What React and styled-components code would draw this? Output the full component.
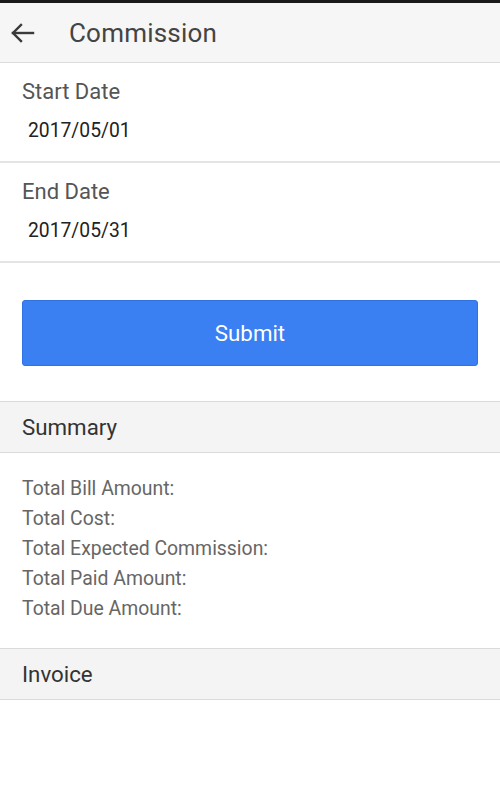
import React from "react";
import styled, { createGlobalStyle } from "styled-components";

const Global = createGlobalStyle`
  body {
    margin: 0;
    background: #fff;
    font-family: Roboto, "Liberation Sans", sans-serif;
  }
`;

const Page = styled.div`
  width: 500px;
  min-height: 806px;
  background: #fff;
  border-top: 3px solid #1a1a1a;
  box-sizing: border-box;
`;

const TopBar = styled.header`
  height: 59px;
  display: flex;
  align-items: center;
  background: #f6f6f6;
  border-bottom: 1px solid #dcdcdc;
  padding-left: 10px;
`;

const Title = styled.h1`
  margin: 0 0 0 33px;
  font-size: 26px;
  font-weight: 400;
  color: #444;
  letter-spacing: 0.2px;
`;

const Field = styled.div`
  height: 100px;
  padding: 17px 22px 0;
  box-sizing: border-box;
  border-bottom: 2px solid #e4e4e4;
`;

const Label = styled.div`
  font-size: 22px;
  color: #555;
  line-height: 24px;
`;

const Value = styled.div`
  margin: 15px 0 0 6px;
  font-size: 19.3px;
  color: #222;
  line-height: 24px;
`;

const ButtonWrap = styled.div`
  padding: 37px 22px 35px;
`;

const Button = styled.button`
  width: 100%;
  height: 66px;
  border: 1px solid #2f72e0;
  border-radius: 3px;
  background: #3a80f2;
  color: #fff;
  font-family: inherit;
  font-size: 22.3px;
  cursor: pointer;
`;

const SectionHead = styled.div`
  height: 50px;
  display: flex;
  align-items: center;
  padding-left: 22px;
  background: #f4f4f4;
  border-top: 1px solid #dadada;
  border-bottom: 1px solid #dadada;
  font-size: 22.3px;
  color: #333;
`;

const SummaryList = styled.ul`
  list-style: none;
  margin: 0;
  padding: 21px 22px 24px;
`;

const SummaryItem = styled.li`
  font-size: 19.4px;
  line-height: 30px;
  color: #666;
`;

const summary = [
  "Total Bill Amount:",
  "Total Cost:",
  "Total Expected Commission:",
  "Total Paid Amount:",
  "Total Due Amount:",
];

export default function App() {
  return (
    <Page>
      <Global />
      <TopBar>
        <svg width="26" height="22" viewBox="0 0 26 22" fill="none" stroke="#3a3a3a" strokeWidth="2.4" strokeLinecap="square">
          <path d="M3 11h20" />
          <path d="M11 3l-8 8 8 8" />
        </svg>
        <Title>Commission</Title>
      </TopBar>
      <Field>
        <Label>Start Date</Label>
        <Value>2017/05/01</Value>
      </Field>
      <Field>
        <Label>End Date</Label>
        <Value>2017/05/31</Value>
      </Field>
      <ButtonWrap>
        <Button>Submit</Button>
      </ButtonWrap>
      <SectionHead>Summary</SectionHead>
      <SummaryList>
        {summary.map((s) => (
          <SummaryItem key={s}>{s}</SummaryItem>
        ))}
      </SummaryList>
      <SectionHead>Invoice</SectionHead>
    </Page>
  );
}
